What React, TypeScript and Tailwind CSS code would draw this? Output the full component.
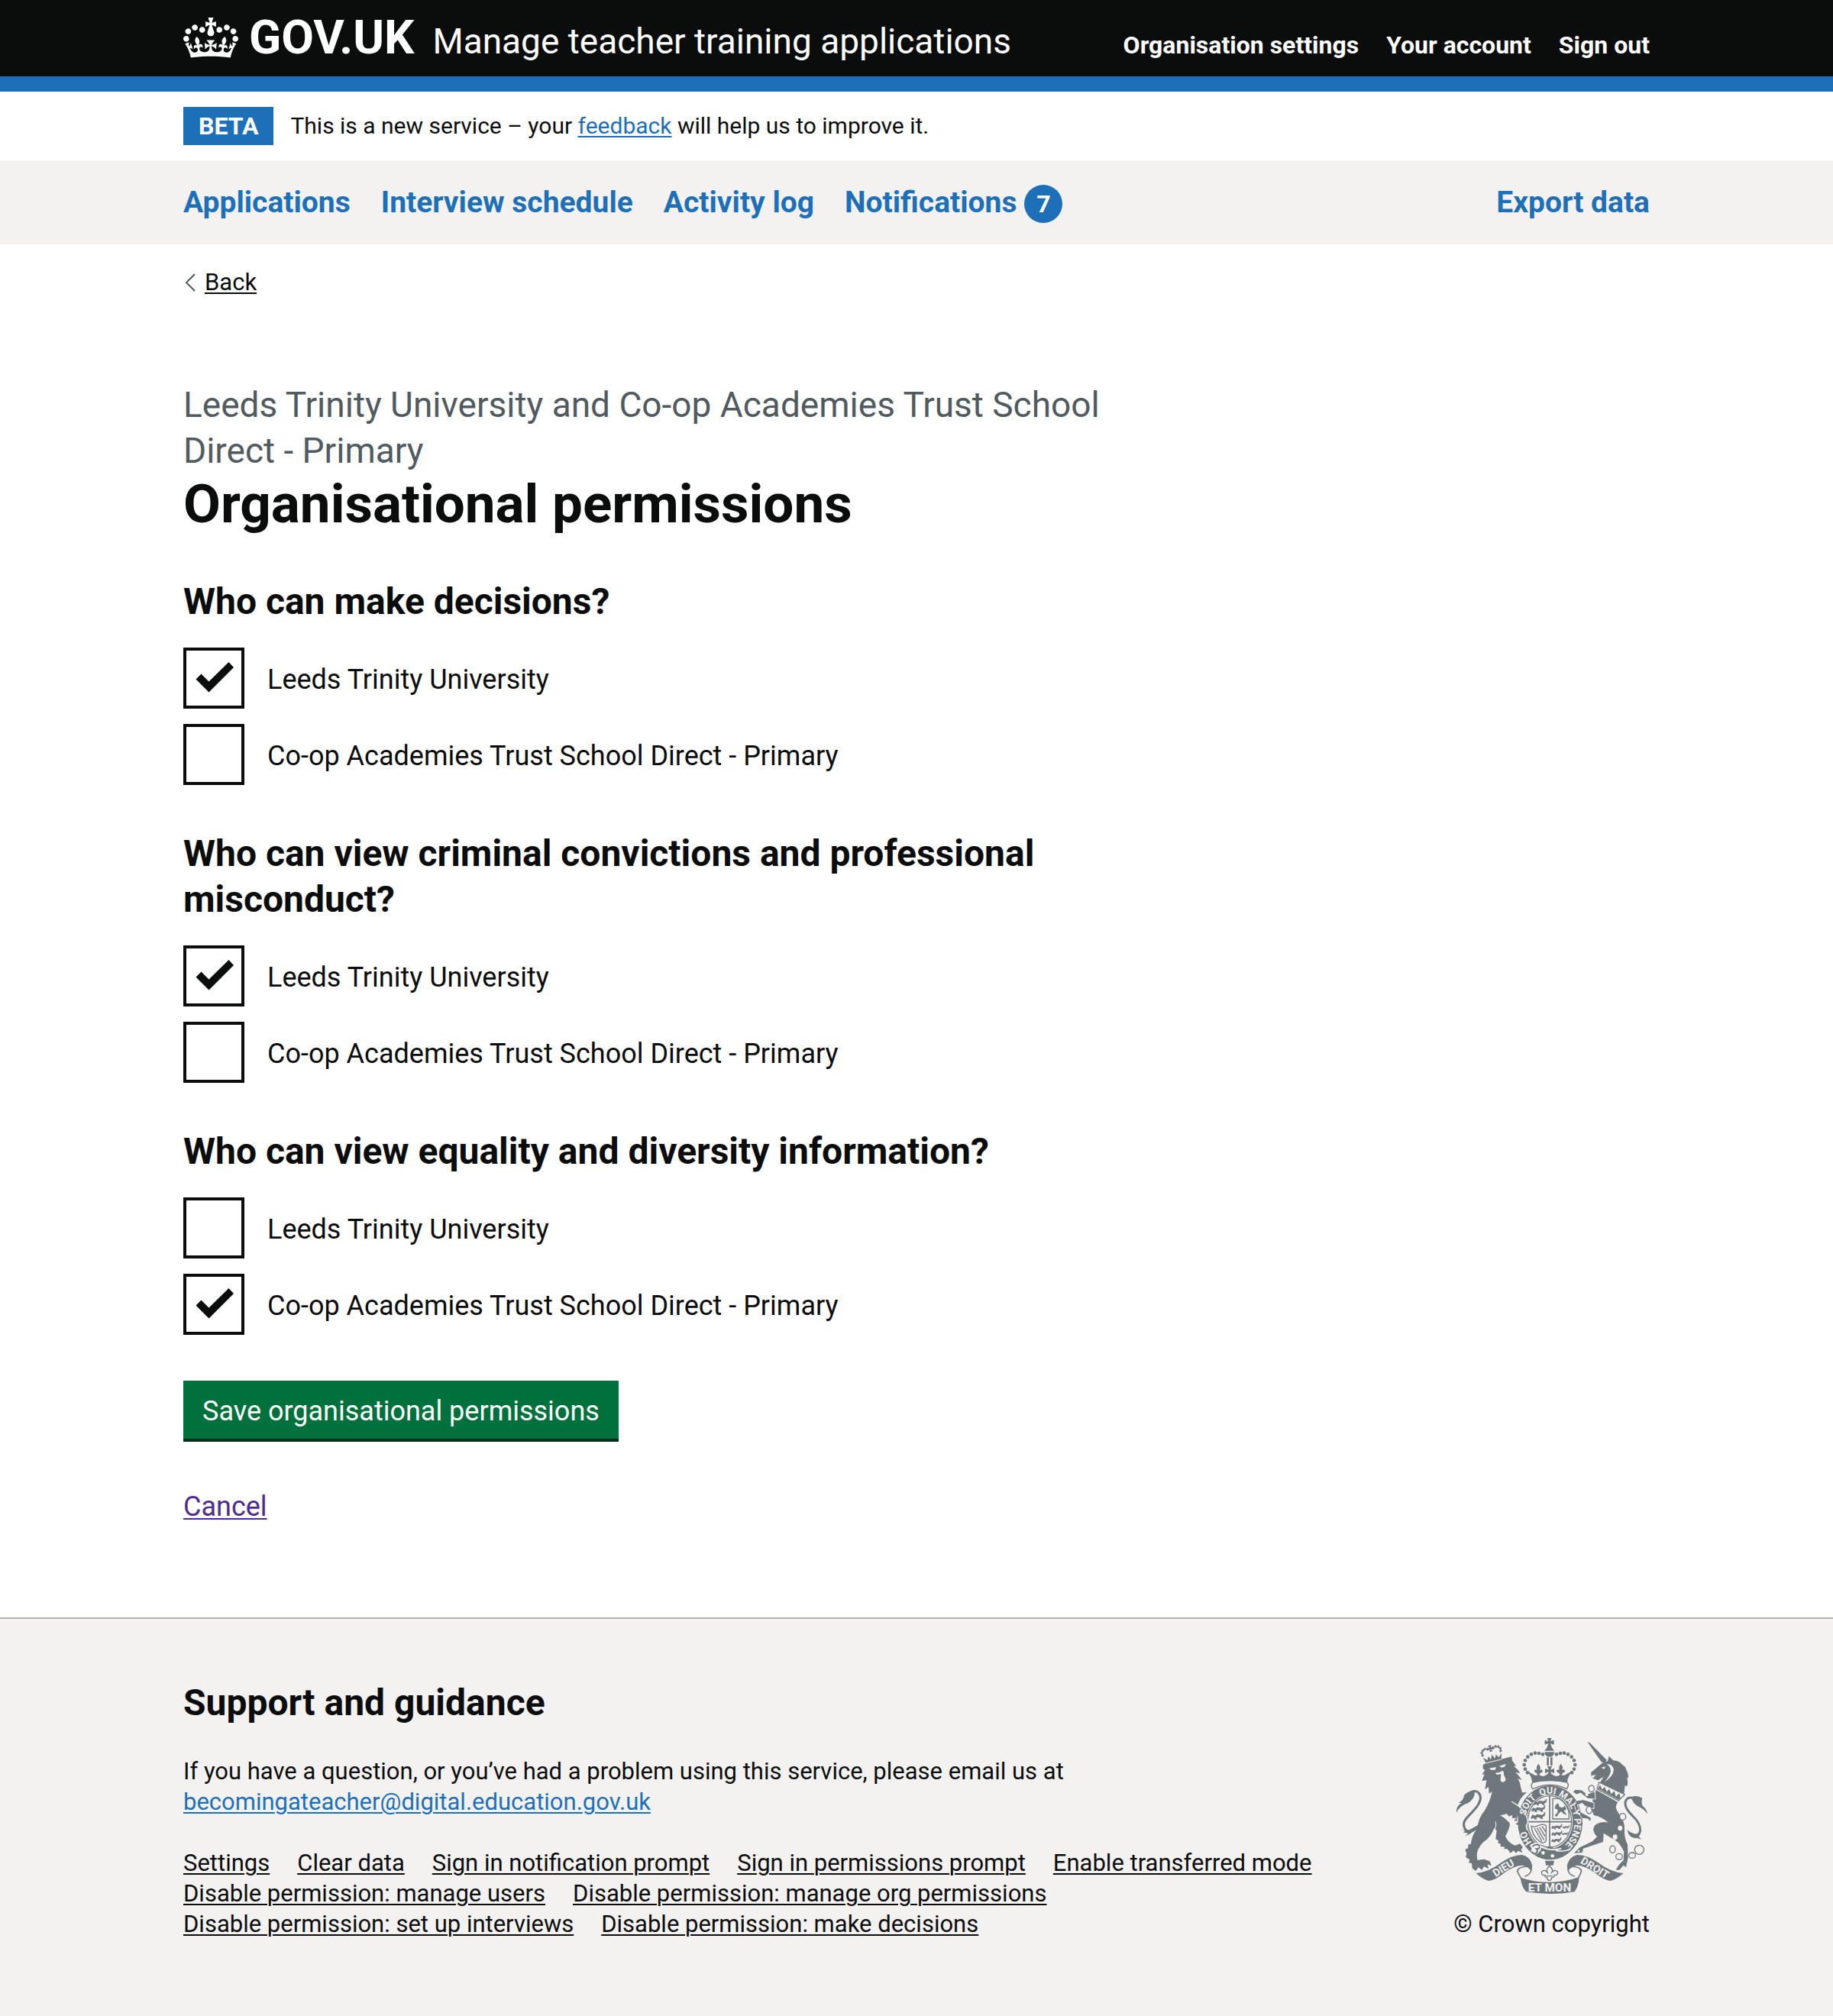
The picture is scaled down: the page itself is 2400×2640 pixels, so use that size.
import React, { useState } from 'react';

const organisations = ['Leeds Trinity University', 'Co-op Academies Trust School Direct - Primary'];

const questions = [
  { id: 'decisions', title: 'Who can make decisions?', initial: [true, false] },
  { id: 'misconduct', title: 'Who can view criminal convictions and professional misconduct?', initial: [true, false] },
  { id: 'diversity', title: 'Who can view equality and diversity information?', initial: [false, true] },
];

const footerLinks = [
  'Settings',
  'Clear data',
  'Sign in notification prompt',
  'Sign in permissions prompt',
  'Enable transferred mode',
  'Disable permission: manage users',
  'Disable permission: manage org permissions',
  'Disable permission: set up interviews',
  'Disable permission: make decisions',
];

const underline = 'underline decoration-2 underline-offset-[3px]';

function Crown() {
  return (
    <svg aria-hidden="true" viewBox="0 0 132 97" className="h-[53px] w-[72px] shrink-0" fill="currentColor" fillRule="evenodd">
      <path d="M25 30.2c3.5 1.5 7.7-.2 9.1-3.7 1.5-3.6-.2-7.8-3.9-9.2-3.6-1.4-7.6.3-9.1 3.9-1.4 3.5.3 7.5 3.9 9zM9 39.5c3.6 1.5 7.8-.2 9.2-3.7 1.5-3.6-.2-7.8-3.9-9.1-3.6-1.5-7.6.2-9.1 3.8-1.4 3.5.3 7.5 3.8 9zM4.4 57.2c3.5 1.5 7.7-.2 9.1-3.8 1.5-3.6-.2-7.7-3.9-9.1-3.5-1.5-7.6.3-9.1 3.8-1.4 3.5.3 7.6 3.9 9.1zm38.3-21.4c3.5 1.5 7.7-.2 9.1-3.8 1.5-3.6-.2-7.7-3.9-9.1-3.6-1.5-7.6.3-9.1 3.8-1.3 3.6.4 7.7 3.9 9.1zm64.4-5.6c-3.6 1.5-7.8-.2-9.1-3.7-1.5-3.6.2-7.8 3.8-9.2 3.6-1.4 7.7.3 9.2 3.9 1.3 3.5-.4 7.5-3.9 9zm15.9 9.3c-3.6 1.5-7.7-.2-9.1-3.7-1.5-3.6.2-7.8 3.7-9.1 3.6-1.5 7.7.2 9.2 3.8 1.5 3.5-.3 7.5-3.8 9zm4.7 17.7c-3.6 1.5-7.8-.2-9.2-3.8-1.5-3.6.2-7.7 3.9-9.1 3.6-1.5 7.7.3 9.2 3.8 1.3 3.5-.4 7.6-3.9 9.1zM89.3 35.8c-3.6 1.5-7.8-.2-9.2-3.8-1.4-3.6.2-7.7 3.9-9.1 3.6-1.5 7.7.3 9.2 3.8 1.4 3.6-.3 7.7-3.9 9.1zM69.7 17.7l8.9 4.7V9.3l-8.9 2.8c-.2-.3-.5-.6-.9-.9L72.4 0H59.6l3.5 11.2c-.3.3-.6.5-.9.9l-8.8-2.8v13.1l8.8-4.7c.3.3.6.7.9.9l-5 15.4v.1c-.2.8-.4 1.6-.4 2.4 0 4.1 3.1 7.5 7 8.1h.2c.3 0 .7.1 1 .1.4 0 .7 0 1-.1h.2c4-.6 7.1-4.1 7.1-8.1 0-.8-.1-1.7-.4-2.4V34l-5.1-15.4c.4-.2.7-.6 1-.9zM66 92.8c16.9 0 32.8 1.1 47.1 3.2 4-16.9 8.9-26.7 14-33.5l-9.6-3.4c1 4.9 1.1 7.2 0 10.2-1.5-1.4-3-4.3-4.2-8.7L108.6 76c2.8-2 5-3.2 7.5-3.3-4.4 9.4-10 11.9-13.6 11.2-4.3-.8-6.3-4.6-5.6-7.9 1-4.7 5.7-5.9 8-.5 4.3-8.7-3-11.4-7.6-8.8 7.1-7.2 7.9-13.5 2.1-21.1-8 6.1-8.1 12.3-4.5 20.8-4.7-5.4-12.1-2.5-9.5 6.2 3.4-5.2 7.9-2 7.2 3.1-.6 4.3-6.4 7.8-13.5 7.2-10.3-.9-10.9-8-11.2-13.8 2.5-.5 7.1 1.8 11 7.3L80.2 60c-4.1 4.4-8 5.3-12.3 5.4 1.4-4.4 8-11.6 8-11.6H55.5s6.4 7.2 7.9 11.6c-4.2-.1-8-1-12.3-5.4l1.4 16.4c3.9-5.5 8.5-7.7 10.9-7.3-.3 5.8-.9 12.8-11.1 13.8-7.2.6-12.9-2.9-13.5-7.2-.7-5 3.8-8.3 7.1-3.1 2.7-8.7-4.6-11.6-9.4-6.2 3.7-8.5 3.6-14.7-4.6-20.8-5.8 7.6-5 13.9 2.2 21.1-4.7-2.6-11.9.1-7.7 8.8 2.3-5.5 7.1-4.2 8.1.5.7 3.3-1.3 7.1-5.7 7.9-3.5.7-9-1.8-13.5-11.2 2.5.1 4.7 1.3 7.5 3.3l-4.7-15.4c-1.2 4.4-2.7 7.2-4.3 8.7-1.1-3-.9-5.3 0-10.2l-9.5 3.4c5 6.9 9.9 16.7 14 33.5 14.8-2.1 30.8-3.2 47.7-3.2z" />
    </svg>
  );
}

const crownBeads = [
  [27, 112], [42, 108], [57, 107], [72, 112], [86, 122], [96, 136], [100, 153], [96, 170], [87, 184],
];

const fleur = 'M0-22Q12-8 5 4Q16-4 16 8Q14 14 8 12Q8 20 0 22Q-8 20-8 12Q-14 14-16 8Q-16-4-5 4Q-12-8 0-22Z';
const pattee = 'M-9-18H9L4-4L18-9V9L4 4L9 18H-9L-4 4L-18 9V-9L-4-4Z';
const passant = 'M-26 4L-20-6L-12-2L-6-7L10-5L18-9L16-15L22-12L20-2L12 3L14 9L6 8L2 3L-8 4L-6 10L-14 9L-16 4L-22 9Z';

function RoyalArms() {
  return (
    <svg role="img" aria-label="Royal coat of arms" viewBox="72 48 750 612" className="h-[204px] w-[250px] fill-[#6e777b]">
      {/* Lion: tail, body, crown */}
      <g>
        <path className="fill-none stroke-[#6e777b]" strokeWidth="9" d="M112 272Q142 246 160 264Q176 284 152 318Q134 340 112 362Q90 388 110 410Q126 424 158 396" />
        <path d="M72 342Q70 314 92 304L80 302Q100 294 102 272Q122 252 144 262Q142 290 116 304Q84 314 72 342Z" />
        <path d="M88 402Q106 416 124 408L160 388Q146 420 104 434L118 423L98 418L106 414Z" />
        <path d="M176 153L187 148L276 124L289 121L291 137Q300 146 306 159L296 158Q316 172 321 187L303 182Q322 200 328 213L312 208Q323 222 324 240L330 262L348 262Q322 282 312 312L334 334Q348 354 352 378L342 394L346 408L332 402L336 412L320 408L312 396L324 396L304 386L316 376L298 372L308 362L290 362L292 350L278 356L270 346L244 352Q268 366 282 384Q282 400 264 434Q276 460 302 470L322 463L333 478L326 486L331 499L314 491L306 500L296 490L284 500L272 484L258 484L262 476L244 474L246 464L234 460L238 452L226 444L230 412L220 402Q206 440 176 458Q152 484 152 508L154 528L180 524L203 532L209 550L194 544L198 562L180 552L172 566L158 556L148 570L134 560L132 540L120 538L124 526L108 516L112 502L106 486L118 480L118 466L128 466Q132 430 154 402Q158 362 182 334Q204 298 212 258L200 266L198 240L184 250L190 214L172 216L182 190L172 192L184 174L176 168Z" />
        <path className="fill-none stroke-[#f3f2f1]" strokeWidth="3" d="M226 376Q230 394 222 408" />
        <path className="fill-[#f3f2f1]" d="M200 167L228 162L224 173L210 174ZM240 158L266 150L262 160L250 164ZM224 184Q240 186 252 176Q260 180 258 192L265 208Q266 221 254 221Q243 220 245 207L247 190L230 192Z" />
        <g transform="rotate(-14 214 125)">
          <path d="M182 146V134L178 116L192 130L198 116L206 130L214 112L222 130L230 116L238 130L252 116L247 134V146Z" />
          {[[178, 107], [177, 97], [183, 89], [192, 85], [202, 88], [226, 88], [236, 85], [246, 89], [252, 97], [251, 107]].map(([x, y]) => (
            <circle key={`${x}-${y}`} cx={x} cy={y} r="5" />
          ))}
          <path transform="translate(214 88) scale(.7)" d={pattee} />
          <path className="fill-none stroke-[#f3f2f1]" strokeWidth="3" d="M182 140H247" />
        </g>
      </g>

      {/* Unicorn: horn, head, collar, body, tail */}
      <g>
        <path d="M587 64L596 67L662 134L655 150L640 140Z" />
        <path d="M630 158L644 147L666 139L671 119L688 136Q712 136 724 154Q738 160 738 172Q748 186 747 206L741 202Q748 220 742 238L734 234L730 270L634 226L650 200L628 214L606 206L618 197L602 198L600 184Z" />
        <path className="fill-[#f3f2f1]" d="M640 164L658 160L652 170ZM662 150Q686 150 690 172Q688 202 652 220Q676 198 678 176Q676 160 662 150ZM604 194L622 192L606 200Z" />
        <path className="fill-[#f3f2f1] stroke-[#6e777b]" strokeWidth="4" d="M632 222L733 270L709 294L624 248Z" />
        <path d="M628 246L636 232L644 250L654 240L662 259L672 248L680 268L692 256L698 278L712 264L716 284L708 290Z" />
        <path d="M620 252L706 300Q690 318 708 342Q734 376 732 404Q730 440 744 466L746 520Q742 536 738 556L728 548L712 566L698 566L712 544L728 528L730 494Q708 450 682 442L650 422L648 456L594 474L570 482L566 498L534 500L556 478L606 454L624 436Q600 412 616 390Q640 374 668 380Q640 356 612 352Q600 332 608 304L606 284Z" />
        <path className="fill-none stroke-[#6e777b]" strokeWidth="9" d="M778 290Q744 270 735 300Q732 324 764 354Q796 384 794 412Q786 442 752 424" />
        <path d="M758 280Q782 270 802 284Q796 300 804 316Q818 324 822 346Q808 326 788 318Q764 306 758 280Z" />
        <path d="M742 408Q766 430 796 424L788 434L798 446L780 440Q752 446 742 408Z" />
      </g>

      {/* Garter and shield */}
      <ellipse cx="440" cy="380" rx="131" ry="150" className="fill-[#f3f2f1]" />
      <ellipse cx="440" cy="380" rx="127" ry="146" />
      <ellipse cx="438" cy="376" rx="91" ry="106" className="fill-[#f3f2f1]" />
      <ellipse cx="438" cy="376" rx="86" ry="101" className="fill-none stroke-[#6e777b]" strokeWidth="4" />
      <path className="fill-none stroke-[#6e777b]" strokeWidth="5" d="M438 272V480M350 377H526" />
      <g>
        <path transform="translate(403 302) scale(1.1)" d={passant} />
        <path transform="translate(396 328) scale(1.15)" d={passant} />
        <path transform="translate(395 356) scale(1.2)" d={passant} />
        <path transform="translate(468 398) scale(.9)" d={passant} />
        <path transform="translate(468 424) scale(.9)" d={passant} />
        <path transform="translate(466 450) scale(.85)" d={passant} />
        <path transform="translate(504 398) scale(.6)" d={passant} />
        <path transform="translate(500 424) scale(.55)" d={passant} />
        <path d="M462 310L472 304L476 318L488 322L498 314L504 328L494 334L506 350L492 346L484 336L474 344L466 358L458 352L468 342L470 330L458 324Z" />
        <path className="fill-none stroke-[#6e777b]" strokeWidth="4" d="M450 286V366H514V340Q506 306 476 286Z" />
        <path className="fill-none stroke-[#6e777b]" strokeWidth="4" d="M366 394Q380 400 398 390Q412 384 424 392V452Q416 464 404 458Q368 434 366 394ZM378 402L408 454M388 401L416 448M398 398L420 434M408 394L422 416" />
        <path d="M424 480Q438 466 452 480L448 490H428Z" />
      </g>
      <g className="fill-[#f3f2f1]">
        <circle cx="412" cy="499" r="7" />
        <circle cx="449" cy="511" r="7" />
        <path d="M360 470Q374 456 396 460Q410 470 404 486Q392 508 372 506Q360 494 368 482Z" />
      </g>
      <path className="fill-none stroke-[#6e777b]" strokeWidth="6" d="M370 474Q384 462 398 470Q402 484 386 484Q396 494 382 502Q372 504 368 494" />
      <path className="fill-none stroke-[#f3f2f1]" strokeWidth="5" d="M400 474Q440 494 484 482M462 490Q500 496 520 484" />

      {/* Lion's paw and shoulder over the garter */}
      <path className="fill-none stroke-[#f3f2f1]" strokeWidth="4" d="M288 297L326 322Q348 346 353 378L345 394L349 410" />
      <path d="M306 316L326 326Q346 350 350 378L342 392L345 406L333 400L334 410L322 405L314 396L324 394L306 386L316 376Z" />

      {/* Unicorn's forelegs and chain over the garter */}
      <g className="stroke-[#f3f2f1]" strokeWidth="3">
        <path d="M618 288L588 286L572 274L560 264L544 270L529 260L538 250L564 252L584 268L616 258Z" />
        <path d="M612 326L578 316L566 304L546 312L562 340L582 350L602 362L598 377L588 366L566 364L552 346L540 330L534 306L544 294L570 290L612 302Z" />
      </g>
      <g className="fill-none stroke-[#6e777b]" strokeWidth="4">
        <ellipse cx="602" cy="247" rx="11" ry="13" />
        <ellipse cx="593" cy="331" rx="11" ry="14" className="fill-[#f3f2f1]" />
        <ellipse cx="725" cy="357" rx="12" ry="13" className="fill-[#f3f2f1]" />
        <ellipse cx="685" cy="485" rx="11" ry="14" />
        <ellipse cx="711" cy="514" rx="13" ry="12" />
        <ellipse cx="762" cy="509" rx="13" ry="11" />
        <circle cx="790" cy="487" r="18" />
      </g>
      <g className="fill-[#f3f2f1]">
        <ellipse cx="715" cy="402" rx="9" ry="10" />
        <ellipse cx="695" cy="437" rx="9" ry="10" />
        <circle cx="584" cy="270" r="6" />
        <circle cx="552" cy="492" r="4" />
      </g>

      <path id="garter-path" className="fill-none" d="M438 492A97 112 0 0 1 438 268A97 112 0 0 1 438 492" />
      <g className="fill-[#f3f2f1] font-['Roboto',sans-serif] text-[37px] font-bold" textAnchor="middle" aria-hidden="true">
        <text><textPath href="#garter-path" startOffset="106">HO</textPath></text>
        <text><textPath href="#garter-path" startOffset="232">SOIT</textPath></text>
        <text><textPath href="#garter-path" startOffset="321">QUI</textPath></text>
        <text><textPath href="#garter-path" startOffset="401">MAL</textPath></text>
        <text><textPath href="#garter-path" startOffset="457">Y</textPath></text>
        <text><textPath href="#garter-path" startOffset="533">PENSE</textPath></text>
      </g>

      {/* Crown above the shield */}
      <path className="fill-[#f3f2f1] stroke-[#6e777b]" strokeWidth="4" d="M372 222Q438 208 506 222Q516 232 506 248Q438 216 372 248Q360 236 372 222Z" />
      <path d="M350 178L372 190Q384 200 394 190Q408 204 422 194L438 186L454 194Q468 204 482 190Q492 200 504 190L528 178Q508 200 507 222Q438 210 369 222Q368 200 350 178Z" />
      {crownBeads.map(([dx, y]) => (
        <g key={`${dx}-${y}`}>
          <circle cx={438 + dx} cy={y} r="7" />
          <circle cx={438 - dx} cy={y} r="7" />
        </g>
      ))}
      <path transform="translate(437 65)" d={pattee} />
      <path d="M430 82H444L456 98H418ZM418 103H457Q454 122 438 122Q420 122 418 103Z" />
      <path d="M427 124H435V156H427ZM441 124H449V156H441Z" />
      <path transform="translate(438 177)" d={pattee} />
      <path transform="translate(394 171)" d={fleur} />
      <path transform="translate(482 171)" d={fleur} />

      {/* Motto scroll */}
      <g className="fill-none stroke-[#6e777b]" strokeWidth="5">
        <path d="M350 552Q308 556 312 574Q322 592 330 606M366 560Q368 582 340 592" />
        <path d="M524 552Q566 556 562 574Q554 592 546 606M510 560Q508 582 536 592" />
      </g>
      <path d="M148 579Q196 576 244 540Q292 506 330 507Q362 514 370 550L366 570Q352 552 330 548Q298 550 262 576Q226 606 200 609Q180 606 148 579Z" />
      <path d="M728 579Q680 576 632 540Q584 506 546 507Q514 514 506 550L510 570Q524 552 546 548Q578 550 614 576Q650 606 676 609Q696 606 728 579Z" />
      <path d="M324 596Q438 634 554 594Q552 630 536 652Q438 668 346 652Q326 632 324 596Z" />
      <g className="fill-[#f3f2f1] font-['Roboto',sans-serif] font-bold" textAnchor="middle" aria-hidden="true">
        <text className="text-[42px]" transform="translate(264 571) rotate(-32)">DIEU</text>
        <text className="text-[42px]" transform="translate(608 570) rotate(32)">DROIT</text>
        <text className="text-[46px]" transform="translate(438 650)">ET MON</text>
      </g>

      {/* Fleur-de-lis pendant */}
      <path d="M420 530H456L452 548H424Z" />
      <path className="fill-none stroke-[#6e777b]" strokeWidth="4" d="M437 550Q456 566 444 580Q454 560 470 574Q470 590 456 586Q458 596 446 596Q446 606 437 608Q428 606 428 596Q418 596 420 586Q406 590 406 574Q420 560 432 580Q420 566 437 550ZM424 590H450" />
    </svg>
  );
}

function Question({ id, title, initial }: { id: string; title: string; initial: boolean[] }) {
  const [checked, setChecked] = useState(initial);
  return (
    <fieldset>
      <legend className="text-[48px] leading-[60px] font-bold">{title}</legend>
      <div className="mt-[30px] flex flex-col gap-5">
        {organisations.map((name, index) => (
          <div key={name} className="flex items-center gap-[30px]">
            <span className="relative size-20 shrink-0">
              <input
                id={`${id}-${index}`}
                type="checkbox"
                checked={checked[index]}
                onChange={() => setChecked(checked.map((value, i) => (i === index ? !value : value)))}
                className="peer block size-20 appearance-none border-4 border-[#0b0c0c] bg-white"
              />
              <svg aria-hidden="true" viewBox="0 0 80 80" className="pointer-events-none absolute inset-0 hidden fill-[#0b0c0c] peer-checked:block">
                <path d="M16.5 41.5L23.5 34.5L33.5 44.5L59.5 19L66 26L33.5 58.5Z" />
              </svg>
            </span>
            <label htmlFor={`${id}-${index}`} className="pt-1 text-[36px] leading-[50px]">{name}</label>
          </div>
        ))}
      </div>
    </fieldset>
  );
}

export default function App() {
  return (
    <div className="bg-white font-['Roboto',sans-serif] text-[#0b0c0c]">
      <header className="border-b-20 border-[#1d70b8] bg-[#0b0c0c] text-white">
        <div className="mx-auto flex min-h-[100px] max-w-[2000px] items-baseline justify-between gap-10 px-10 pt-[19px]">
          <div className="flex items-baseline gap-6">
            <a href="#" className="flex items-center gap-[14px]">
              <Crown />
              <span className="self-baseline text-[62px] leading-[60px] font-bold">GOV.UK</span>
            </a>
            <a href="#" className="text-[46px] leading-[60px]">Manage teacher training applications</a>
          </div>
          <nav aria-label="Account" className="flex gap-9 text-[32px] leading-10 font-bold">
            <a href="#">Organisation settings</a>
            <a href="#">Your account</a>
            <a href="#">Sign out</a>
          </nav>
        </div>
      </header>

      <div className="mx-auto flex max-w-[2000px] gap-[22px] px-10 py-5 text-[30px] leading-[50px]">
        <strong className="bg-[#1d70b8] px-5 text-[32px] font-bold text-white">BETA</strong>
        <p>
          This is a new service – your <a href="#" className={`text-[#1d70b8] ${underline}`}>feedback</a> will help us to improve it.
        </p>
      </div>

      <nav aria-label="Primary" className="bg-[#f3f2f1] text-[39px] leading-[50px] font-bold text-[#1d70b8]">
        <div className="mx-auto flex max-w-[2000px] items-baseline gap-10 px-10 py-[30px]">
          <a href="#">Applications</a>
          <a href="#">Interview schedule</a>
          <a href="#">Activity log</a>
          <a href="#" className="-my-1 flex items-baseline gap-[10px]">
            Notifications
            <span className="size-[50px] rounded-full bg-[#1d70b8] text-center text-[32px] text-white">7</span>
          </a>
          <a href="#" className="ml-auto">Export data</a>
        </div>
      </nav>

      <div className="mx-auto max-w-[2000px] px-10 pt-[30px] pb-30">
        <a href="#" className="flex w-fit items-center gap-3 text-[31px] leading-10">
          <svg aria-hidden="true" viewBox="0 0 16 24" className="h-6 w-4 fill-none stroke-[#505a5f]" strokeWidth="2">
            <path d="M15 1L4 12L15 23" />
          </svg>
          <span className={underline}>Back</span>
        </a>

        <main className="mt-[110px] w-2/3 pr-10">
          <h1 className="text-[71px] leading-20 font-bold">
            <span className="block text-[46px] leading-[60px] font-normal text-[#505a5f]">
              Leeds Trinity University and Co-op Academies Trust School Direct - Primary
            </span>
            Organisational permissions
          </h1>
          <form onSubmit={(event) => event.preventDefault()} className="mt-[58px] flex flex-col items-start gap-[60px]">
            {questions.map((question) => (
              <Question key={question.id} {...question} />
            ))}
            <button type="submit" className="border-b-4 border-[#002d18] bg-[#00703c] px-[25px] pt-5 pb-4 text-[36px] leading-10 text-white">
              Save organisational permissions
            </button>
            <a href="#" className={`text-[36px] leading-[50px] text-[#4c2c92] ${underline}`}>Cancel</a>
          </form>
        </main>
      </div>

      <footer className="border-t-2 border-[#b1b4b6] bg-[#f3f2f1]">
        <div className="mx-auto flex max-w-[2000px] items-end gap-[60px] px-10 pt-20 pb-[100px] text-[31px] leading-10">
          <div className="flex-1">
            <h2 className="text-[48px] leading-[60px] font-bold">Support and guidance</h2>
            <p className="mt-10">
              If you have a question, or you’ve had a problem using this service, please email us at
              <br />
              <a href="#" className={`text-[#1d70b8] ${underline}`}>becomingateacher@digital.education.gov.uk</a>
            </p>
            <ul className="mt-10 flex flex-wrap gap-x-9">
              {footerLinks.map((link) => (
                <li key={link}>
                  <a href="#" className={underline}>{link}</a>
                </li>
              ))}
            </ul>
          </div>
          <a href="#" className="flex flex-col items-center gap-5">
            <RoyalArms />
            © Crown copyright
          </a>
        </div>
      </footer>
    </div>
  );
}
